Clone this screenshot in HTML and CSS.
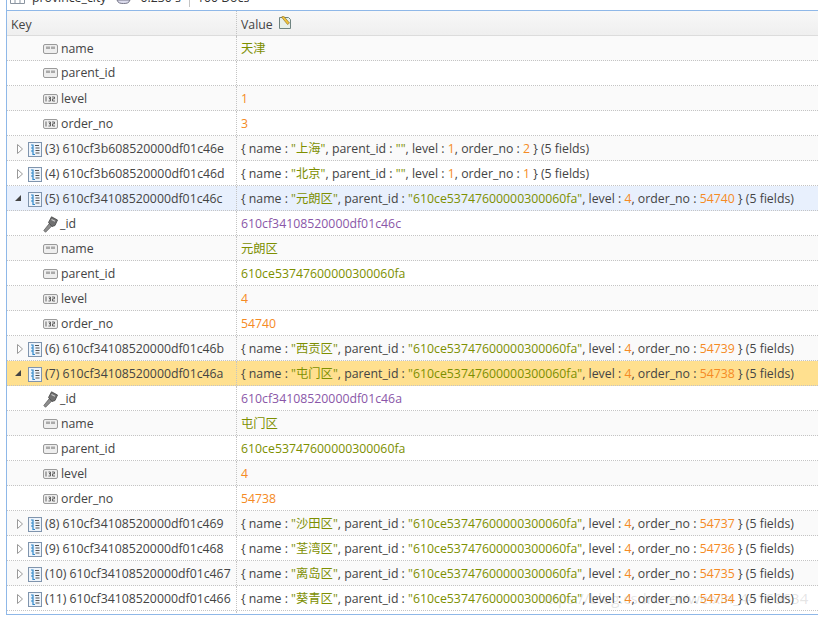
FILE: index.html
```html
<!DOCTYPE html>
<html lang="zh">
<head>
<meta charset="utf-8">
<title>province_city</title>
<link rel="stylesheet" href="styles.css">
</head>
<body>
<svg class="defs" width="0" height="0" aria-hidden="true">
  <symbol id="i-str" viewBox="0 0 15 10"><rect x=".5" y=".5" width="14" height="9" rx="1.5" fill="#eee" stroke="#9a9a9a"/><path d="M4 2.500v2.500M6 2.500v2.500M9 2.500v2.500M11 2.500v2.500" stroke="#666"/></symbol>
  <symbol id="i-int" viewBox="0 0 15 10"><rect x=".5" y=".5" width="14" height="9" rx="1.500" fill="#eee" stroke="#9a9a9a"/><path d="M3 2.500v5M5.500 3h2v1.700h-1.500M6 4.700h1.500v2.300h-2M9 3h2.500v1.800H9.500v2.200h2.500" fill="none" stroke="#555" stroke-width=".9"/></symbol>
  <symbol id="i-doc" viewBox="0 0 14 15"><rect x=".5" y=".5" width="13" height="14" fill="#eef4fb" stroke="#7f94ad"/><path d="M3 3h2v9.500h2M3 6h2M3 9h2" fill="none" stroke="#2f86c8" stroke-width="1.200"/><path d="M7 3.500h4M7.500 6h4M7.500 8.500h4M7.500 11h4" stroke="#555"/></symbol>
  <symbol id="i-key" viewBox="0 0 15 17"><path d="M.8 14.500l1.700 1.800 6.500-6.500-2.500-2.500z" fill="#8d8d8d" stroke="#555" stroke-width=".7"/><path d="M5.500 6.500L8.500.8l6 3.200-2.500 5.500-3 1z" fill="#6f6f6f" stroke="#444" stroke-width=".8"/><path d="M8.500 3.500l3.500 1.800" stroke="#c8c8c8" stroke-width="1.200"/></symbol>
  <symbol id="i-open" viewBox="0 0 6 6"><path d="M0 6h6V0z" fill="#444"/></symbol>
  <symbol id="i-closed" viewBox="0 0 8 12"><path d="M1.500 1.500v9l5-4.500z" fill="#fff" stroke="#999"/></symbol>
</svg>

<div class="toolbar">
  <svg class="tb-icon" viewBox="0 0 15 4"><path d="M.5 0v3.500h14V0M5 0v3.500M10 0v3.500" fill="#fff" stroke="#8a94a0"/></svg>
  <span class="tb-text name">province_city</span>
  <svg class="tb-icon clock" viewBox="0 0 15 4"><path d="M1 0c1 3 3 3.500 6.500 3.500S13 3 14 0z" fill="#dde" stroke="#778"/></svg>
  <span class="tb-text">0.230 s</span>
  <span class="tb-sep"></span>
  <span class="tb-text">100 Docs</span>
</div>

<main class="grid">
  <header class="row head">
    <div class="key">Key</div>
    <div class="val">Value
      <svg class="edit" viewBox="0 0 12 13"><path d="M.5 1.500h9l2 2v9h-11z" fill="#e8f0ea" stroke="#6f8481"/><path d="M2.500 1l6 7.500 2-1.500L4.500 0z" fill="#f0c53c" stroke="#8c6a24" stroke-width=".6"/></svg>
    </div>
  </header>

  <div class="row odd"><div class="key f"><svg class="t"><use href="#i-str"/></svg>name</div><div class="val s">天津</div></div>
  <div class="row"><div class="key f"><svg class="t"><use href="#i-str"/></svg>parent_id</div><div class="val s"></div></div>
  <div class="row odd"><div class="key f"><svg class="t"><use href="#i-int"/></svg>level</div><div class="val n">1</div></div>
  <div class="row"><div class="key f"><svg class="t"><use href="#i-int"/></svg>order_no</div><div class="val n">3</div></div>

  <div class="row odd"><div class="key d"><svg class="tw"><use href="#i-closed"/></svg><svg class="doc"><use href="#i-doc"/></svg>(3) 610cf3b608520000df01c46e</div><div class="val">{ name : <span class="s">"上海"</span>, parent_id : <span class="s">""</span>, level : <span class="n">1</span>, order_no : <span class="n">2</span> } (5 fields)</div></div>
  <div class="row"><div class="key d"><svg class="tw"><use href="#i-closed"/></svg><svg class="doc"><use href="#i-doc"/></svg>(4) 610cf3b608520000df01c46d</div><div class="val">{ name : <span class="s">"北京"</span>, parent_id : <span class="s">""</span>, level : <span class="n">1</span>, order_no : <span class="n">1</span> } (5 fields)</div></div>

  <div class="row sel"><div class="key d"><svg class="tw op"><use href="#i-open"/></svg><svg class="doc"><use href="#i-doc"/></svg>(5) 610cf34108520000df01c46c</div><div class="val">{ name : <span class="s">"元朗区"</span>, parent_id : <span class="s">"610ce53747600000300060fa"</span>, level : <span class="n">4</span>, order_no : <span class="n">54740</span> } (5 fields)</div></div>
  <div class="row"><div class="key f"><svg class="ki"><use href="#i-key"/></svg>_id</div><div class="val o">610cf34108520000df01c46c</div></div>
  <div class="row odd"><div class="key f"><svg class="t"><use href="#i-str"/></svg>name</div><div class="val s">元朗区</div></div>
  <div class="row"><div class="key f"><svg class="t"><use href="#i-str"/></svg>parent_id</div><div class="val s">610ce53747600000300060fa</div></div>
  <div class="row odd"><div class="key f"><svg class="t"><use href="#i-int"/></svg>level</div><div class="val n">4</div></div>
  <div class="row"><div class="key f"><svg class="t"><use href="#i-int"/></svg>order_no</div><div class="val n">54740</div></div>

  <div class="row odd"><div class="key d"><svg class="tw"><use href="#i-closed"/></svg><svg class="doc"><use href="#i-doc"/></svg>(6) 610cf34108520000df01c46b</div><div class="val">{ name : <span class="s">"西贡区"</span>, parent_id : <span class="s">"610ce53747600000300060fa"</span>, level : <span class="n">4</span>, order_no : <span class="n">54739</span> } (5 fields)</div></div>
  <div class="row hl"><div class="key d"><svg class="tw op"><use href="#i-open"/></svg><svg class="doc"><use href="#i-doc"/></svg>(7) 610cf34108520000df01c46a</div><div class="val">{ name : <span class="s">"屯门区"</span>, parent_id : <span class="s">"610ce53747600000300060fa"</span>, level : <span class="n">4</span>, order_no : <span class="n">54738</span> } (5 fields)</div></div>
  <div class="row"><div class="key f"><svg class="ki"><use href="#i-key"/></svg>_id</div><div class="val o">610cf34108520000df01c46a</div></div>
  <div class="row odd"><div class="key f"><svg class="t"><use href="#i-str"/></svg>name</div><div class="val s">屯门区</div></div>
  <div class="row"><div class="key f"><svg class="t"><use href="#i-str"/></svg>parent_id</div><div class="val s">610ce53747600000300060fa</div></div>
  <div class="row odd"><div class="key f"><svg class="t"><use href="#i-int"/></svg>level</div><div class="val n">4</div></div>
  <div class="row"><div class="key f"><svg class="t"><use href="#i-int"/></svg>order_no</div><div class="val n">54738</div></div>

  <div class="row odd"><div class="key d"><svg class="tw"><use href="#i-closed"/></svg><svg class="doc"><use href="#i-doc"/></svg>(8) 610cf34108520000df01c469</div><div class="val">{ name : <span class="s">"沙田区"</span>, parent_id : <span class="s">"610ce53747600000300060fa"</span>, level : <span class="n">4</span>, order_no : <span class="n">54737</span> } (5 fields)</div></div>
  <div class="row"><div class="key d"><svg class="tw"><use href="#i-closed"/></svg><svg class="doc"><use href="#i-doc"/></svg>(9) 610cf34108520000df01c468</div><div class="val">{ name : <span class="s">"荃湾区"</span>, parent_id : <span class="s">"610ce53747600000300060fa"</span>, level : <span class="n">4</span>, order_no : <span class="n">54736</span> } (5 fields)</div></div>
  <div class="row odd"><div class="key d"><svg class="tw"><use href="#i-closed"/></svg><svg class="doc"><use href="#i-doc"/></svg>(10) 610cf34108520000df01c467</div><div class="val">{ name : <span class="s">"离岛区"</span>, parent_id : <span class="s">"610ce53747600000300060fa"</span>, level : <span class="n">4</span>, order_no : <span class="n">54735</span> } (5 fields)</div></div>
  <div class="row"><div class="key d"><svg class="tw"><use href="#i-closed"/></svg><svg class="doc"><use href="#i-doc"/></svg>(11) 610cf34108520000df01c466</div><div class="val">{ name : <span class="s">"葵青区"</span>, parent_id : <span class="s">"610ce53747600000300060fa"</span>, level : <span class="n">4</span>, order_no : <span class="n">54734</span> } (5 fields)</div></div>
  <div class="tail"><div class="key"></div><div class="val"></div></div>
</main>
<div class="mark">https://blog.csdn.net/weixin_44160634</div>
</body>
</html>
```
FILE: styles.css
```css
html, body { margin: 0; padding: 0; background: #fff; }
body {
  width: 818px;
  height: 618px;
  overflow: hidden;
  position: relative;
  font-family: "Open Sans", "Noto Sans CJK SC", sans-serif;
  font-size: 12.3px;
  color: #444;
}
.defs { position: absolute; }
.toolbar {
  height: 10px;
  overflow: hidden;
  margin-left: 6px;
  border-left: 1px solid #8fb8e8;
  display: flex;
  align-items: flex-start;
  padding-left: 3px;
}
.tb-text { line-height: 14px; margin-top: -9px; flex: none; color: #333; }
.tb-text.name { margin-left: 7px; }
.tb-icon { width: 15px; height: 4px; flex: none; }
.clock { margin: 0 9px 0 10px; }
.tb-sep { width: 1px; height: 7px; background: #c4c4c4; margin: 0 7px 0 8px; }
.grid {
  border: 1px solid #8fb8e8;
  border-right: 0;
  margin-left: 6px;
  height: 603px;
  overflow: hidden;
}
.row {
  display: grid;
  grid-template-columns: 230px 1fr;
  height: 24px;
  line-height: 26px;
  border-bottom: 1px dotted #c4c4c4;
  white-space: nowrap;
}
.row.odd { background: #fafafa; }
.row.sel { background: #e8f0fd; }
.row.hl { background: #ffe08f; }
.head {
  background: linear-gradient(#f8f8f8, #efefef);
  border-bottom: 1px solid #dcdcdc;
}
.head .val { padding-top: 1px; }
.key {
  padding: 0 0 0 4px;
  border-right: 1px dotted #c4c4c4;
  display: flex;
  align-items: center;
  overflow: hidden;
}
.val { padding-left: 4px; }
.f { padding-left: 36px; }
.d { padding-left: 9px; }
.t { width: 15px; height: 10px; margin-right: 3px; flex: none; }
.ki { width: 15px; height: 17px; margin-right: 2px; flex: none; }
.doc { width: 14px; height: 15px; margin-right: 3px; flex: none; }
.tw { width: 8px; height: 12px; margin-right: 4px; flex: none; }
.tw.op { width: 6px; height: 6px; margin: -2px 7px 0 -1px; }
.edit { width: 12px; height: 13px; vertical-align: 0; margin-left: 3px; }
.s { color: #7d8f00; }
.n { color: #f58a24; }
.o { color: #8a57a8; }
.tail { display: grid; grid-template-columns: 230px 1fr; height: 10px; }
.mark {
  position: absolute;
  left: 538px;
  top: 589px;
  font-size: 15px;
  line-height: 18px;
  color: rgba(120, 120, 120, .2);
  pointer-events: none;
  white-space: nowrap;
}
```
